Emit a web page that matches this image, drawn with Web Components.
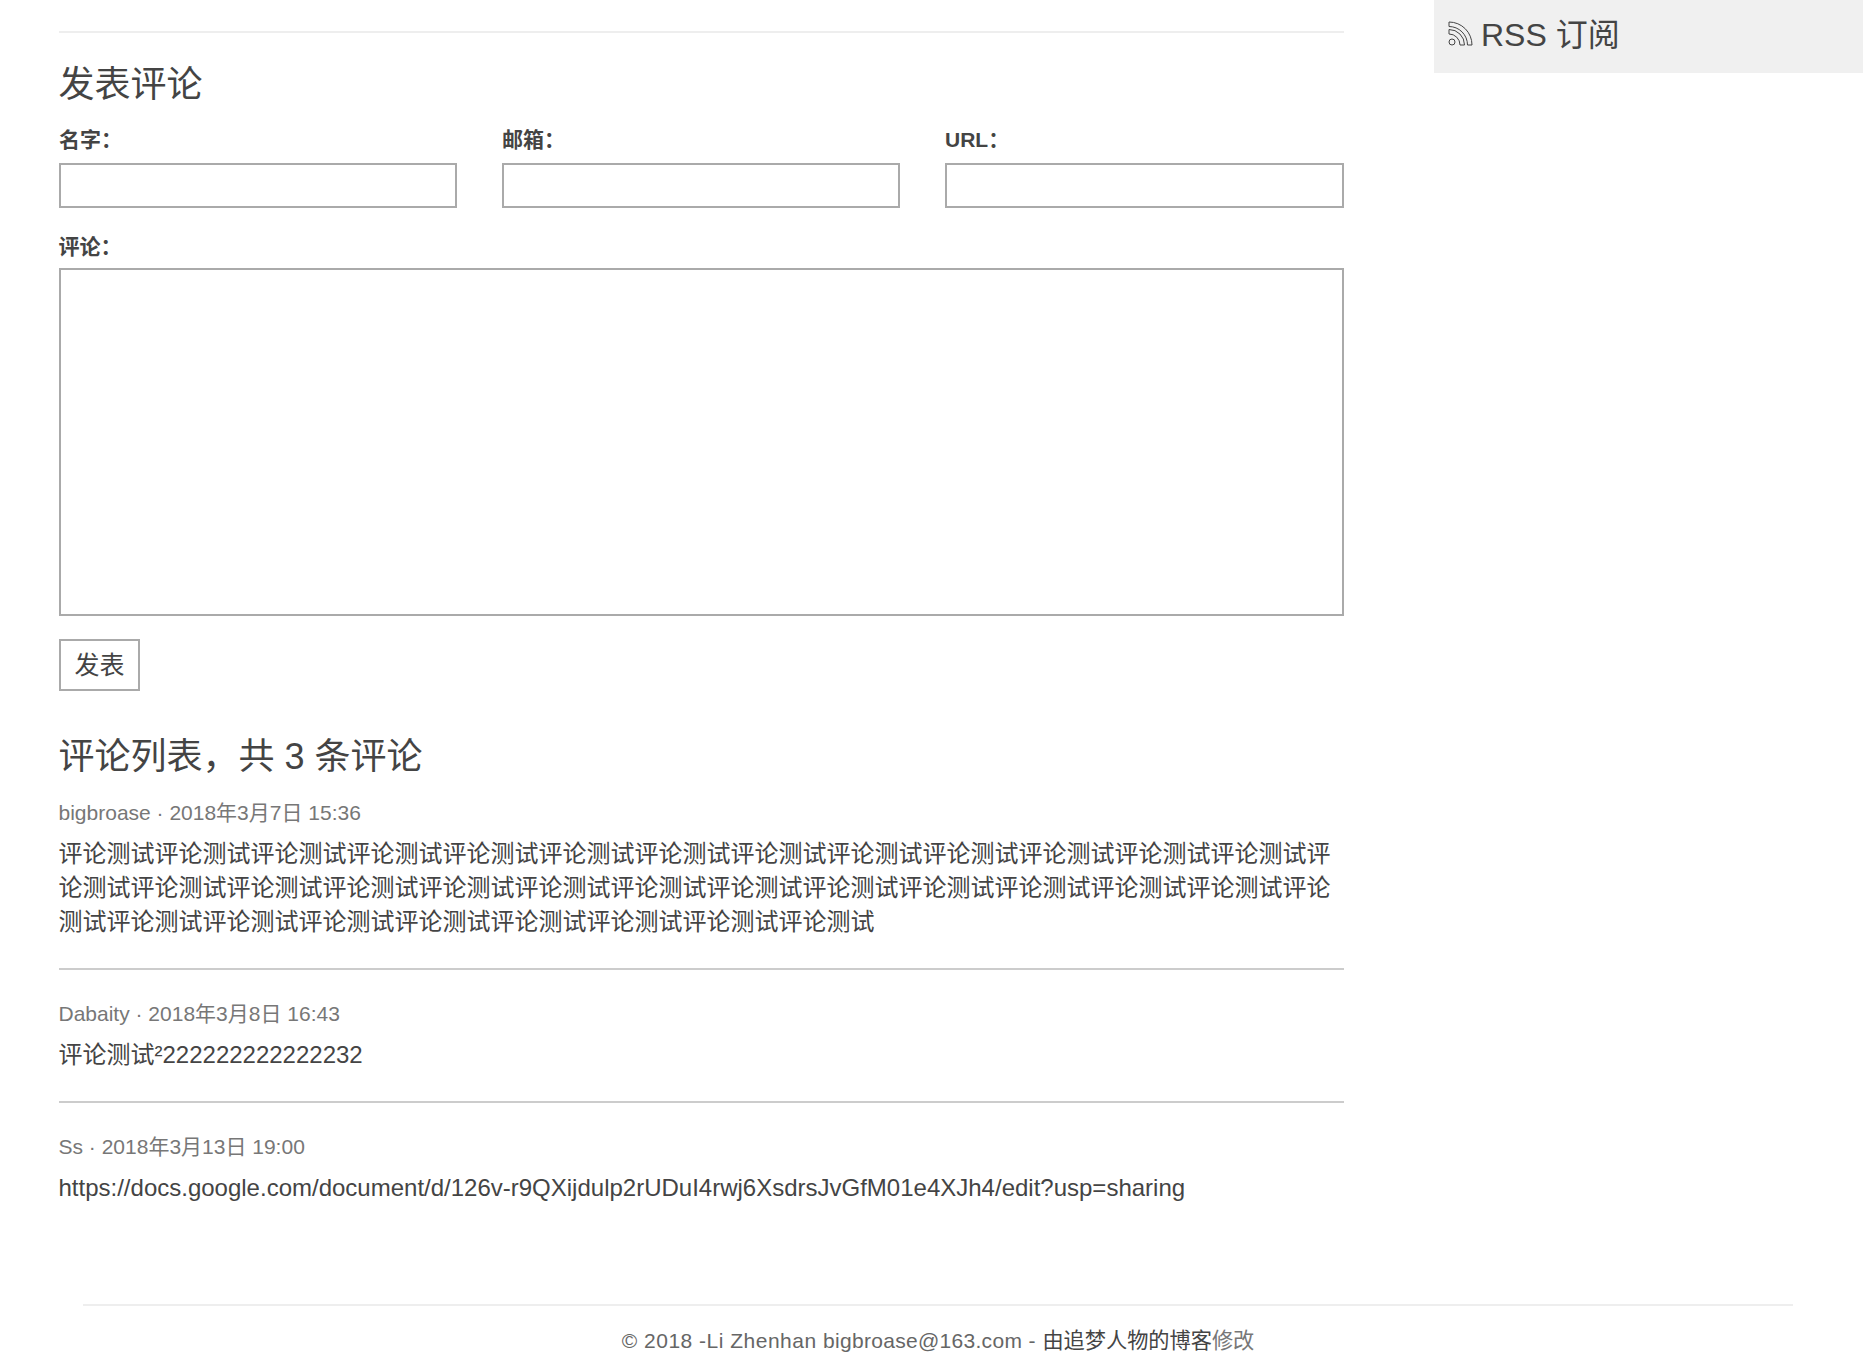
<!DOCTYPE html>
<html lang="zh">
<head>
<meta charset="utf-8">
<title>发表评论</title>
<style>
html, body { margin: 0; padding: 0; background: #fff; }
body {
  font-family: "Liberation Sans", "Noto Sans CJK SC", sans-serif;
  color: #444;
  font-size: 20px;
}
</style>
</head>
<body>
<blog-page>
  <comment-form slot="main"></comment-form>
  <comment-list slot="main" total="3">
    <comment-item author="bigbroase" date="2018年3月7日 15:36">评论测试评论测试评论测试评论测试评论测试评论测试评论测试评论测试评论测试评论测试评论测试评论测试评论测试评论测试评论测试评论测试评论测试评论测试评论测试评论测试评论测试评论测试评论测试评论测试评论测试评论测试评论测试评论测试评论测试评论测试评论测试评论测试评论测试评论测试评论测试</comment-item>
    <comment-item author="Dabaity" date="2018年3月8日 16:43">评论测试²222222222222232</comment-item>
    <comment-item author="Ss" date="2018年3月13日 19:00" last>https://docs.google.com/document/d/126v-r9QXijdulp2rUDuI4rwj6XsdrsJvGfM01e4XJh4/edit?usp=sharing</comment-item>
  </comment-list>
  <rss-box slot="side"></rss-box>
  <page-footer slot="footer"></page-footer>
</blog-page>

<script>
function define(name, html) {
  const template = document.createElement("template");
  template.innerHTML = html;
  customElements.define(name, class extends HTMLElement {
    constructor() {
      super();
      this.attachShadow({ mode: "open" }).appendChild(template.content.cloneNode(true));
    }
  });
}

define("blog-page", `
<style>
:host { display: block; }
.wrap { display: flex; align-items: flex-start; }
.main { width: 1285.5px; margin-left: 58.5px; padding-top: 31px; }
.main::before { content: ""; display: block; height: 2px; background: #eee; }
.side { flex: 1; margin-left: 90px; }
.foot { margin: 0 70px 0 83px; padding-top: 70px; }
</style>
<div class="wrap">
  <div class="main"><slot name="main"></slot></div>
  <div class="side"><slot name="side"></slot></div>
</div>
<div class="foot"><slot name="footer"></slot></div>
`);

define("form-field", `
<style>
:host { display: block; }
label {
  display: block;
  font-size: 21px;
  font-weight: 700;
  line-height: 30px;
  height: 30px;
  margin-bottom: 8px;
}
:host(.area) label { margin-bottom: 6px; }
</style>
<label><slot name="label"></slot></label>
<slot></slot>
`);

define("comment-form", `
<style>
:host { display: block; }
h2 { margin: 0; padding-top: 27px; font-size: 36px; font-weight: 400; line-height: 50px; height: 50px; }
.row { display: grid; grid-template-columns: 398px 398px 399px; column-gap: 45px; margin-top: 15px; padding-left: .5px; }
input, textarea {
  display: block;
  box-sizing: border-box;
  width: 100%;
  border: 2px solid #aaa;
  background: #fff;
  border-radius: 0;
  padding: 0;
  margin: 0;
  font: inherit;
  resize: none;
  outline: 0;
}
input { height: 45px; }
textarea { height: 348px; }
.area { margin-top: 24px; }
.area textarea { margin-left: .5px; width: 1285px; }
button {
  display: block;
  box-sizing: border-box;
  width: 81px;
  height: 52px;
  margin: 23px 0 0 .5px;
  padding: 0 0 4px;
  border: 2px solid #aaa;
  border-radius: 0;
  background: #fff;
  color: #444;
  font: inherit;
  font-size: 25px;
}
</style>
<h2>发表评论</h2>
<div class="row">
  <form-field><span slot="label">名字&#xFF1A;</span><input type="text"></form-field>
  <form-field><span slot="label">邮箱&#xFF1A;</span><input type="text"></form-field>
  <form-field><span slot="label">URL&#xFF1A;</span><input type="text"></form-field>
</div>
<form-field class="area"><span slot="label">评论&#xFF1A;</span><textarea></textarea></form-field>
<button type="button">发表</button>
`);

define("comment-list", `
<style>
:host { display: block; }
h2 { margin: 0; padding-top: 41px; font-size: 36px; font-weight: 400; line-height: 50px; height: 50px; }
.items { margin-top: 16px; }
</style>
<h2>评论列表&#xFF0C;共 3 条评论</h2>
<div class="items"><slot></slot></div>
`);

define("comment-item", `
<style>
:host { display: block; border-bottom: 2px solid #ccc; margin-bottom: 29px; padding-bottom: 29px; }
:host([last]) { border-bottom: 0; margin-bottom: 0; }
.meta { font-size: 21px; line-height: 30px; color: #777; margin-bottom: 9px; }
.body { font-size: 24px; line-height: 34px; word-break: break-all; }
</style>
<div class="meta" id="meta"></div>
<div class="body"><slot></slot></div>
`);

// meta line comes from the attributes
document.querySelectorAll("comment-item").forEach((el) => {
  el.shadowRoot.getElementById("meta").textContent =
    el.getAttribute("author") + " · " + el.getAttribute("date");
});

define("rss-box", `
<style>
:host { display: flex; align-items: center; box-sizing: border-box; height: 73px; background: #f0f0f0; padding: 0 0 9px 14px; font-size: 32px; }
svg { width: 25px; height: 25px; margin-right: 8px; flex: none; margin-top: 3px; }
</style>
<svg viewBox="0 0 25 25" fill="none" stroke="#444" stroke-width="1">
  <circle cx="4" cy="21" r="3"/>
  <path d="M1 8.5 V13 A11 11 0 0 1 12 24 H16.5 A15.5 15.5 0 0 0 1 8.5Z"/>
  <path d="M1 1 V5.5 A18.5 18.5 0 0 1 19.5 24 H24 A23 23 0 0 0 1 1Z"/>
</svg>
<span>RSS 订阅</span>
`);

define("page-footer", `
<style>
:host { display: block; border-top: 2px solid #eee; text-align: center; padding-top: 20px; height: 46px; font-size: 21.2px; line-height: 30px; color: #666; }
.latin { font-size: 21px; letter-spacing: .5px; }
.mail { letter-spacing: .3px; }
.dark { color: #444; }
.soft { color: #777; }
</style>
<span class="latin">© 2018 -Li Zhenhan <span class="mail">bigbroase@163.com</span> - </span><span class="dark">由追梦人物的博客</span><span class="soft">修改</span>
`);
</script>
</body>
</html>
